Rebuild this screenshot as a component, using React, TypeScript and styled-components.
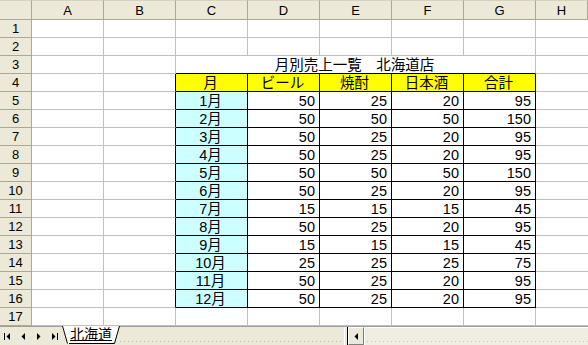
import React from 'react';
import styled, { createGlobalStyle } from 'styled-components';

const GlobalStyle = createGlobalStyle`
	html, body {
		margin: 0;
		padding: 0;
		background: #ffffff;
	}
	body {
		font-family: "Liberation Sans", "Noto Sans CJK JP", sans-serif;
		font-size: 12px;
		color: #000000;
	}
`;

const COLS = ['A', 'B', 'C', 'D', 'E', 'F', 'G', 'H'];
const GRID = '#c0c0c0';
const HEAD_LINE = '#aca899';

// month, beer, shochu, sake, total
const rows: [string, number, number, number, number][] = [
	['1月', 50, 25, 20, 95],
	['2月', 50, 50, 50, 150],
	['3月', 50, 25, 20, 95],
	['4月', 50, 25, 20, 95],
	['5月', 50, 50, 50, 150],
	['6月', 50, 25, 20, 95],
	['7月', 15, 15, 15, 45],
	['8月', 50, 25, 20, 95],
	['9月', 15, 15, 15, 45],
	['10月', 25, 25, 25, 75],
	['11月', 50, 25, 20, 95],
	['12月', 50, 25, 20, 95],
];

const headers = ['月', 'ビール', '焼酎', '日本酒', '合計'];

const App: React.FC = () => {
	const cellsFor = (r: number) => {
		const out: React.ReactNode[] = [];
		if (r === 3) {
			out.push(<Cell key="A" />);
			out.push(<Cell key="B" />);
			out.push(
				<Cell key="title" $span={5} $align="center" $bb="#000">
					月別売上一覧　北海道店
				</Cell>
			);
			out.push(<Cell key="H" $last />);
			return out;
		}
		COLS.forEach((col, c) => {
			const inTable = r >= 4 && r <= 16;
			const boxed = inTable && c >= 2 && c <= 6;
			let text: React.ReactNode = null;
			let bg = '#ffffff';
			let align = 'right';
			if (r === 4 && boxed) {
				text = headers[c - 2];
				bg = '#ffff00';
				align = 'center';
			} else if (boxed) {
				const row = rows[r - 5];
				if (c === 2) {
					bg = '#ccffff';
					align = 'center';
				}
				text = row[c - 2];
			}
			out.push(
				<Cell
					key={col}
					$bg={bg}
					$align={align}
					$rb={boxed || (inTable && c === 1) ? '#000' : GRID}
					$bb={boxed ? '#000' : GRID}
					$last={c === 7}
				>
					{text}
				</Cell>
			);
		});
		return out;
	};

	return (
		<>
			<GlobalStyle />
			<Window>
				<Grid>
					<Corner />
					{COLS.map((col) => (
						<ColHead key={col}>{col}</ColHead>
					))}
					{Array.from({ length: 17 }, (_, i) => (
						<React.Fragment key={i}>
							<RowHead>{i + 1}</RowHead>
							{cellsFor(i + 1)}
						</React.Fragment>
					))}
				</Grid>
				<TabBar>
					<NavGroup>
						<NavButton>
							<svg width="7" height="7" viewBox="0 0 7 7">
								<rect x="0" y="0" width="1" height="7" fill="#000" />
								<polygon points="6,0 6,7 2.5,3.5" fill="#000" />
							</svg>
						</NavButton>
						<NavButton>
							<svg width="5" height="7" viewBox="0 0 5 7">
								<polygon points="4,0 4,7 0.5,3.5" fill="#000" />
							</svg>
						</NavButton>
						<NavButton>
							<svg width="5" height="7" viewBox="0 0 5 7">
								<polygon points="1,0 1,7 4.5,3.5" fill="#000" />
							</svg>
						</NavButton>
						<NavButton>
							<svg width="7" height="7" viewBox="0 0 7 7">
								<polygon points="1,0 1,7 4.5,3.5" fill="#000" />
								<rect x="6" y="0" width="1" height="7" fill="#000" />
							</svg>
						</NavButton>
					</NavGroup>
					<SheetTab>
						<svg width="7" height="19" viewBox="0 0 7 19">
							<polygon points="0,0 7,0 7,18 5.5,18" fill="#ffffff" />
							<line x1="0.5" y1="0" x2="5.5" y2="17.5" stroke="#000" strokeWidth="1" />
						</svg>
						<TabLabel>北海道</TabLabel>
						<svg width="7" height="19" viewBox="0 0 7 19">
							<polygon points="0,0 6.5,0 1.5,18 0,18" fill="#ffffff" />
							<line x1="1.5" y1="17.5" x2="6.5" y2="0" stroke="#000" strokeWidth="1" />
							<line x1="0" y1="17.5" x2="1.5" y2="17.5" stroke="#000" strokeWidth="1" />
						</svg>
					</SheetTab>
					<Filler />
					<Splitter />
					<ScrollButton>
						<svg width="4" height="7" viewBox="0 0 4 7">
							<polygon points="4,0 4,7 0.5,3.5" fill="#000" />
						</svg>
					</ScrollButton>
					<Track />
				</TabBar>
			</Window>
		</>
	);
};

const Window = styled.div`
	width: 588px;
	height: 345px;
	display: flex;
	flex-direction: column;
	overflow: hidden;
	background: #ffffff;
`;

const Grid = styled.div`
	display: grid;
	grid-template-columns: 32px repeat(7, 72px) 1fr;
	grid-template-rows: 20px repeat(17, 18px);
	height: 326px;
	flex: none;
`;

const Corner = styled.div`
	background: #ece9d8;
	border-top: 1px solid #d6d2c2;
	border-right: 1px solid ${HEAD_LINE};
	border-bottom: 1px solid ${HEAD_LINE};
	box-sizing: border-box;
`;

const ColHead = styled.div`
	background: #ece9d8;
	border-top: 1px solid #d6d2c2;
	border-right: 1px solid ${HEAD_LINE};
	border-bottom: 1px solid ${HEAD_LINE};
	box-sizing: border-box;
	display: flex;
	align-items: center;
	justify-content: center;
	font-size: 13px;
	line-height: 14px;
	padding-top: 1px;

	&:last-child {
		border-right: none;
	}
`;

const RowHead = styled.div`
	background: #ece9d8;
	border-right: 1px solid ${HEAD_LINE};
	border-bottom: 1px solid ${HEAD_LINE};
	box-sizing: border-box;
	display: flex;
	align-items: center;
	justify-content: center;
	font-size: 13px;
	line-height: 14px;
	padding-top: 1px;
`;

const Cell = styled.div<{
	$bg?: string;
	$align?: string;
	$rb?: string;
	$bb?: string;
	$span?: number;
	$last?: boolean;
}>`
	grid-column: span ${(p) => p.$span || 1};
	background: ${(p) => p.$bg || '#ffffff'};
	border-right: ${(p) => (p.$last ? 'none' : `1px solid ${p.$rb || GRID}`)};
	border-bottom: 1px solid ${(p) => p.$bb || GRID};
	box-sizing: border-box;
	display: flex;
	align-items: center;
	justify-content: ${(p) =>
		p.$align === 'center' ? 'center' : p.$align === 'left' ? 'flex-start' : 'flex-end'};
	padding: 1px 4px 0 2px;
	font-size: 14.5px;
	line-height: 15px;
	white-space: nowrap;
	overflow: hidden;
`;

const TabBar = styled.div`
	flex: 1;
	display: flex;
	align-items: stretch;
	background: #ece9d8;
	border-top: 1px solid #a0a0a0;
	box-sizing: border-box;
`;

const NavGroup = styled.div`
	display: flex;
	width: 62px;
	flex: none;
	background-image: linear-gradient(to right, #b8b4a4 1px, transparent 1px);
	background-size: 3px 1px;
	background-repeat: repeat-x;
	background-position: 0 12px;
`;

const NavButton = styled.div`
	width: 15.5px;
	display: flex;
	align-items: center;
	justify-content: center;
	background: #ece9d8;
	padding-top: 1px;

	&:first-child {
		justify-content: flex-start;
		padding-left: 4px;
		box-sizing: border-box;
	}
`;

const SheetTab = styled.div`
	display: flex;
	align-items: stretch;
	flex: none;
	margin-top: -1px;
`;

const TabLabel = styled.div`
	background: #ffffff;
	border-bottom: 1px solid #000;
	box-sizing: border-box;
	height: 18px;
	display: flex;
	align-items: center;
	padding: 0 1px;
	font-size: 14px;
	line-height: 15px;
	text-decoration: underline;
	text-underline-offset: 1px;
`;

const Filler = styled.div`
	flex: 1;
	background-image: linear-gradient(to right, #b8b4a4 1px, transparent 1px);
	background-size: 4px 1px;
	background-repeat: repeat-x;
	background-position: 0 14px;
`;

const Splitter = styled.div`
	width: 4px;
	flex: none;
	border-left: 1px solid #ffffff;
	border-right: 1px solid #000000;
	box-sizing: border-box;
	margin-left: 1px;
`;

const ScrollButton = styled.div`
	width: 16px;
	flex: none;
	display: flex;
	align-items: center;
	justify-content: center;
	border: 1px solid #ffffff;
	border-right-color: #808080;
	border-bottom-color: #808080;
	box-sizing: border-box;
	background: #ece9d8;
`;

const Track = styled.div`
	flex: 1;
	border-top: 1px solid #ffffff;
	border-left: 1px solid #ffffff;
	background-color: #f0eee3;
	background-image: linear-gradient(to right, #c8c4b4 1px, transparent 1px);
	background-size: 4px 1px;
	background-repeat: repeat-x;
	background-position: 10px 13px;
`;

export default App;
